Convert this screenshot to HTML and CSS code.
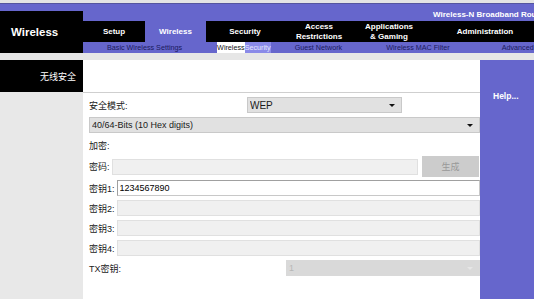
FILE: index.html
```html
<!DOCTYPE html>
<html lang="zh-cn">
<head>
  <meta charset="UTF-8" />
  <meta name="viewport" content="width=device-width, initial-scale=1.0"/>
  <title>Wireless Security</title>
  <link rel="stylesheet" href="styles.css">
</head>
<body>
  <div class="topline"></div>

  <div class="header">
    <div class="brand-col">
      <div class="brand">Wireless</div>
    </div>
    <div class="menu-col">
      <div class="model">Wireless-N Broadband Router</div>
      <ul class="nav">
        <li class="tab tab-setup">Setup</li>
        <li class="tab tab-wireless active">Wireless</li>
        <li class="tab tab-security">Security</li>
        <li class="tab tab-access">Access<br>Restrictions</li>
        <li class="tab tab-apps">Applications<br>&amp; Gaming</li>
        <li class="tab tab-admin">Administration</li>
      </ul>
      <div class="subnav">
        <span class="sub sub-basic">Basic Wireless Settings</span>
        <span class="sub sub-security"><span class="hl-white">Wireless</span><span class="hl-purple">Security</span></span>
        <span class="sub sub-guest">Guest Network</span>
        <span class="sub sub-mac">Wireless MAC Filter</span>
        <span class="sub sub-adv">Advanced</span>
      </div>
    </div>
  </div>

  <div class="strip"></div>

  <div class="main">
    <div class="side">
      <div class="side-title">无线安全</div>
    </div>

    <div class="content">
      <div class="content-head"></div>
      <form class="form">
        <div class="row">
          <span class="label label-mode">安全模式:</span>
          <div class="select select-mode">
            <select><option>WEP</option></select>
          </div>
        </div>
        <div class="row">
          <div class="select select-full">
            <select><option>40/64-Bits (10 Hex digits)</option></select>
          </div>
        </div>
        <div class="row">
          <span class="label">加密:</span>
        </div>
        <div class="row row-pass">
          <span class="label">密码:</span>
          <input class="field" type="text" disabled>
          <button type="button" class="gen" disabled>生成</button>
        </div>
        <div class="row">
          <span class="label">密钥1:</span>
          <input class="field field-on" type="text" value="1234567890">
        </div>
        <div class="row">
          <span class="label">密钥2:</span>
          <input class="field" type="text" disabled>
        </div>
        <div class="row">
          <span class="label">密钥3:</span>
          <input class="field" type="text" disabled>
        </div>
        <div class="row">
          <span class="label">密钥4:</span>
          <input class="field" type="text" disabled>
        </div>
        <div class="row">
          <span class="label label-tx">TX密钥:</span>
          <div class="select select-tx">
            <select disabled><option>1</option></select>
          </div>
        </div>
      </form>
    </div>

    <div class="help">Help...</div>
  </div>
</body>
</html>
```

FILE: styles.css
```css
html, body {
  height: 100%;
}

body {
  margin: 0;
  overflow: hidden;
  display: flex;
  flex-direction: column;
  font-family: "Liberation Sans", Arial, "Noto Sans CJK SC", sans-serif;
  color: #1a1a1a;
  background-color: #fff;
}

.topline {
  height: 3px;
  background-color: #e4e4e4;
  border-bottom: 1px solid #55559f;
}

.header {
  display: grid;
  grid-template-columns: 83px 1fr;
  background-color: #6666cc;
  height: 49px;
}

.brand {
  margin-top: 7px;
  height: 42px;
  background-color: #000;
  color: white;
  font-weight: bold;
  font-size: 11.5px;
  display: flex;
  align-items: center;
  padding-left: 11px;
}

.menu-col {
  overflow: hidden;
}

.model {
  height: 17px;
  box-sizing: border-box;
  padding: 6px 0 0 350px;
  line-height: 10px;
  font-size: 8px;
  font-weight: bold;
  color: white;
  white-space: nowrap;
}

.nav {
  display: flex;
  height: 21px;
  margin: 0;
  padding: 0;
  list-style: none;
  background-color: #000;
}

.tab {
  display: flex;
  align-items: center;
  justify-content: center;
  text-align: center;
  flex-shrink: 0;
  color: white;
  font-size: 8px;
  font-weight: bold;
  line-height: 10px;
}

.tab.active {
  background-color: #6666cc;
}

.tab-setup { width: 62px; }
.tab-wireless { width: 61px; }
.tab-security { width: 78px; }
.tab-access { width: 70px; }
.tab-apps { width: 70px; }
.tab-admin { width: 122px; }

.subnav {
  display: flex;
  height: 11px;
  font-size: 7.2px;
  line-height: 11px;
  color: #1a1a5e;
  white-space: nowrap;
}

.sub-basic { margin-left: 24px; }
.sub-security { margin-left: 35px; }
.sub-guest { margin-left: 24px; }
.sub-mac { margin-left: 44px; }
.sub-adv { margin-left: 52px; }

.hl-white,
.hl-purple {
  display: inline-block;
  height: 11px;
}

.hl-white {
  background-color: white;
  color: #111;
}

.hl-purple {
  background-color: #8a8ae8;
  color: #e8e8ff;
}

.strip {
  height: 7px;
  background-color: #e6e6e6;
}

.main {
  flex: 1;
  display: grid;
  grid-template-columns: 83px 397px 1fr;
}

.side {
  background-color: #e8e8e8;
}

.side-title {
  height: 32px;
  background-color: #000;
  color: white;
  font-size: 9px;
  display: flex;
  align-items: center;
  justify-content: flex-end;
  padding-right: 7px;
}

.content-head {
  height: 32px;
  border-bottom: 1px solid #cfcfcf;
}

.form {
  margin: 0;
  padding: 2px 0 0 6px;
}

.row {
  display: flex;
  align-items: center;
  gap: 2px;
  height: 20px;
  font-size: 9px;
}

.row-pass {
  height: 23px;
}

.label-mode {
  width: 156px;
}

.label-tx {
  width: 195px;
}

.select {
  position: relative;
  height: 16px;
}

.select select {
  appearance: none;
  width: 100%;
  height: 100%;
  margin: 0;
  padding: 0 0 0 2px;
  box-sizing: border-box;
  border: 1px solid #c9c9c9;
  border-radius: 0;
  background-color: #e1e1e1;
  color: #1a1a1a;
  font-family: inherit;
  font-size: 9px;
}

.select::after {
  content: "";
  position: absolute;
  right: 7px;
  top: 7px;
  border-left: 3px solid transparent;
  border-right: 3px solid transparent;
  border-top: 3px solid #111;
}

.select-mode {
  width: 155px;
}

.select-mode select {
  font-size: 10px;
}

.select-full {
  flex: 1;
}

.select-tx {
  flex: 1;
}

.select-tx select {
  border: none;
  background-color: #cacaca;
  color: #999;
  padding-left: 3px;
}

.select-tx::after {
  border-top-color: #e6e6e6;
}

.field {
  flex: 1;
  min-width: 0;
  height: 16px;
  margin: 0;
  padding: 0 2px;
  box-sizing: border-box;
  border: 1px solid #e0e0e0;
  background-color: #f0f0f0;
  font-family: inherit;
  font-size: 9px;
  color: #000;
}

.field-on {
  background-color: white;
  border-color: #a0a0a0 #c8c8c8 #c8c8c8 #a0a0a0;
}

.gen {
  width: 57px;
  height: 21px;
  margin: 0 1px 0 2px;
  padding: 0;
  border: none;
  background-color: #cccccc;
  color: #999;
  font-family: "Noto Sans CJK SC", sans-serif;
  font-size: 9px;
}

.help {
  background-color: #6666cc;
  padding: 30px 0 0 13px;
  line-height: 12px;
  color: white;
  font-weight: bold;
  font-size: 8.5px;
}
```
